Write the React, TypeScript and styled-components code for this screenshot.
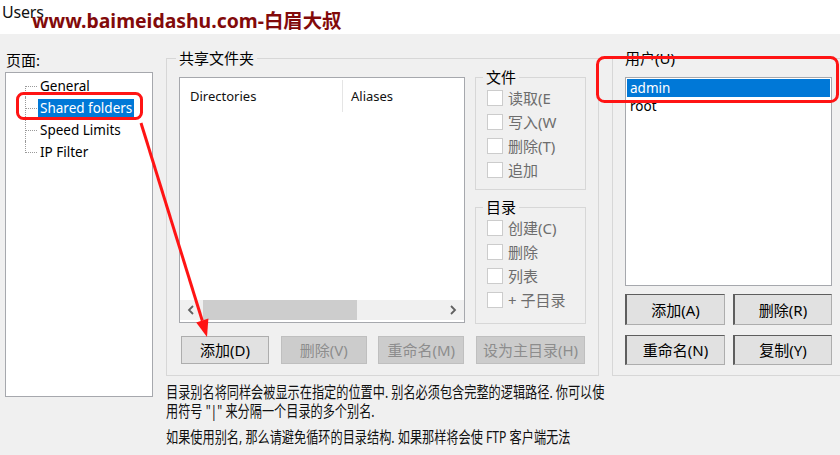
import React from "react";
import styled, { createGlobalStyle, css } from "styled-components";

const GlobalStyle = createGlobalStyle`
  html, body { margin: 0; padding: 0; background: #f0f0f0; }
  body { font-family: "Noto Sans", "Noto Sans CJK SC", sans-serif; color: #000; }
  * { box-sizing: border-box; }
`;

const Window = styled.div`
  position: relative;
  width: 840px;
  height: 455px;
  overflow: hidden;
  background: #f0f0f0;
`;

const TitleBar = styled.div`
  height: 34px;
  background: #fff;
  padding: 1px 0 0 2px;
  font-size: 16px;
  line-height: 22px;
  letter-spacing: -0.2px;
  color: #111;
`;

const Watermark = styled.div`
  position: absolute;
  left: 32px;
  top: 11px;
  font-size: 19.4px;
  line-height: 19px;
  font-weight: 700;
  color: #820a0a;
  white-space: nowrap;
`;

const Body = styled.div`
  display: flex;
  padding-left: 5px;
`;

const LeftCol = styled.div`
  width: 148px;
  flex: none;
  display: flex;
  flex-direction: column;
  padding-top: 17px;
`;

const PageLabel = styled.div`
  height: 21px;
  font-size: 15px;
  line-height: 18px;
  padding-left: 1px;
`;

const TreeBox = styled.div`
  height: 325px;
  background: #fff;
  border: 1px solid #a6a8ad;
  padding-top: 2px;
`;

const TreeRow = styled.div`
  height: 22px;
  display: flex;
  align-items: center;
  padding-left: 19px;
`;

const Connector = styled.span<{ $pos: "first" | "mid" | "last" }>`
  position: relative;
  width: 13px;
  height: 22px;
  flex: none;
  &::before {
    content: "";
    position: absolute;
    left: 0;
    top: ${(p) => (p.$pos === "first" ? "11px" : "0")};
    bottom: ${(p) => (p.$pos === "last" ? "10px" : "0")};
    border-left: 1px dotted #9a9a9a;
  }
  &::after {
    content: "";
    position: absolute;
    left: 1px;
    width: 11px;
    top: 11px;
    border-top: 1px dotted #9a9a9a;
  }
`;

const TreeLabel = styled.span<{ $selected?: boolean }>`
  font-size: 13.5px;
  line-height: 17px;
  padding: 1px 2px;
  white-space: nowrap;
  ${(p) =>
    p.$selected &&
    css`
      background: #0078d7;
      color: #fff;
    `}
`;

const Main = styled.div`
  margin-left: 13px;
  flex: none;
  display: flex;
  flex-direction: column;
`;

const Groups = styled.div`
  display: flex;
  gap: 13px;
  margin-top: 16px;
`;

const Group = styled.fieldset<{ $w: number; $h: number }>`
  margin: 0;
  padding: 0;
  min-width: 0;
  flex: none;
  width: ${(p) => p.$w}px;
  height: ${(p) => p.$h}px;
  border: 1px solid #d7d7d7;
`;

const Legend = styled.legend<{ $ml: number }>`
  margin-left: ${(p) => p.$ml}px;
  padding: 0 3px;
  font-size: 15px;
  line-height: 17px;
`;

const SharedInner = styled.div`
  display: flex;
  flex-direction: column;
  padding: 0 12px;
`;

const TopRow = styled.div`
  display: flex;
  align-items: flex-start;
  gap: 10px;
`;

const FileList = styled.div`
  margin-top: 10px;
  width: 286px;
  height: 246px;
  background: #fff;
  border: 1px solid #a6a8ad;
  display: flex;
  flex-direction: column;
`;

const ListHeader = styled.div`
  display: flex;
  padding-top: 2px;
`;

const HeaderCell = styled.div<{ $w?: number; $sep?: boolean }>`
  height: 32px;
  line-height: 32px;
  font-size: 13px;
  padding-left: ${(p) => (p.$sep ? 10 : 8)}px;
  width: ${(p) => (p.$w ? `${p.$w}px` : "auto")};
  border-right: ${(p) => (p.$sep ? "1px solid #e5e5e5" : "none")};
  color: #111;
`;

const ListSpacer = styled.div`
  flex: 1;
`;

const HScroll = styled.div`
  height: 20px;
  margin-bottom: 2px;
  display: flex;
  align-items: stretch;
  background: #f0f0f0;
`;

const ScrollArrow = styled.div`
  width: 22px;
  display: flex;
  align-items: center;
  justify-content: center;
  flex: none;
`;

const ScrollTrack = styled.div`
  flex: 1;
  display: flex;
`;

const ScrollThumb = styled.div`
  width: 154px;
  margin-left: 1px;
  background: #cdcdcd;
`;

const SideCol = styled.div`
  width: 111px;
  margin-top: 2px;
  display: flex;
  flex-direction: column;
  gap: 9px;
`;

const CheckRow = styled.div`
  height: 24px;
  display: flex;
  align-items: center;
  gap: 5px;
  padding-left: 11px;
`;

const CheckBox = styled.span`
  width: 16px;
  height: 16px;
  flex: none;
  background: #fff;
  border: 1px solid #cccccc;
`;

const CheckLabel = styled.span`
  font-size: 15px;
  line-height: 18px;
  color: #6d6d6d;
  white-space: nowrap;
`;

const ButtonRow = styled.div`
  margin-top: 12px;
  margin-left: 2px;
  width: 404px;
  display: flex;
  justify-content: space-between;
`;

const PushButton = styled.button<{ $w: number; $off?: boolean }>`
  width: ${(p) => p.$w}px;
  height: 28px;
  padding: 0;
  font-family: inherit;
  font-size: 15px;
  line-height: 26px;
  white-space: nowrap;
  background: ${(p) => (p.$off ? "#cccccc" : "#e1e1e1")};
  border: 1px solid ${(p) => (p.$off ? "#bfbfbf" : "#adadad")};
  color: ${(p) => (p.$off ? "#8d8d8d" : "#000")};
`;

const UserInner = styled.div`
  padding-left: 12px;
  display: flex;
  flex-direction: column;
`;

const UserList = styled.div`
  margin-top: 10px;
  width: 207px;
  height: 209px;
  background: #fff;
  border: 1px solid #a6a8ad;
  padding: 1px;
`;

const UserRow = styled.div<{ $selected?: boolean }>`
  height: 18px;
  line-height: 18px;
  font-size: 13.5px;
  padding-left: 3px;
  ${(p) =>
    p.$selected &&
    css`
      background: #0078d7;
      color: #fff;
    `}
`;

const UserButtons = styled.div`
  margin-top: 8px;
  width: 207px;
  display: grid;
  grid-template-columns: 100px 99px;
  grid-template-rows: 31px 30px;
  column-gap: 8px;
  row-gap: 10px;
`;

const RaisedButton = styled.button`
  padding: 0;
  font-family: inherit;
  font-size: 15px;
  line-height: 26px;
  background: #e1e1e1;
  color: #000;
  border-top: 1px solid #5e5e5e;
  border-left: 2px solid #5e5e5e;
  border-right: 1px solid #adadad;
  border-bottom: 1px solid #adadad;
`;

const Note = styled.div`
  margin-top: 7px;
  display: flex;
  flex-direction: column;
`;

const NoteLine = styled.div<{ $gap?: number }>`
  margin-top: ${(p) => p.$gap ?? 0}px;
  font-size: 16px;
  line-height: 19px;
  white-space: nowrap;
  transform: scaleX(0.76);
  transform-origin: left center;
  color: #111;
`;

const Overlay = styled.svg`
  position: absolute;
  left: 0;
  top: 0;
  pointer-events: none;
`;

const Chevron = ({ dir }: { dir: "left" | "right" }) => (
  <svg width="8" height="10" viewBox="0 0 8 10">
    <path
      d={dir === "left" ? "M6 1 L2 5 L6 9" : "M2 1 L6 5 L2 9"}
      fill="none"
      stroke="#606060"
      strokeWidth="1.8"
    />
  </svg>
);

const treeItems = [
  { label: "General", pos: "first" as const },
  { label: "Shared folders", pos: "mid" as const, selected: true },
  { label: "Speed Limits", pos: "mid" as const },
  { label: "IP Filter", pos: "last" as const },
];

const fileChecks = ["读取(E", "写入(W", "删除(T)", "追加"];
const dirChecks = ["创建(C)", "删除", "列表", "+ 子目录"];

export default function App() {
  return (
    <>
      <GlobalStyle />
      <Window>
        <TitleBar>Users</TitleBar>
        <Watermark>www.baimeidashu.com-白眉大叔</Watermark>
        <Body>
          <LeftCol>
            <PageLabel>页面:</PageLabel>
            <TreeBox>
              {treeItems.map((t) => (
                <TreeRow key={t.label}>
                  <Connector $pos={t.pos} />
                  <TreeLabel $selected={t.selected}>{t.label}</TreeLabel>
                </TreeRow>
              ))}
            </TreeBox>
          </LeftCol>
          <Main>
            <Groups>
              <Group $w={433} $h={326}>
                <Legend $ml={9}>共享文件夹</Legend>
                <SharedInner>
                  <TopRow>
                    <FileList>
                      <ListHeader>
                        <HeaderCell $w={163} $sep>
                          Directories
                        </HeaderCell>
                        <HeaderCell>Aliases</HeaderCell>
                      </ListHeader>
                      <ListSpacer />
                      <HScroll>
                        <ScrollArrow>
                          <Chevron dir="left" />
                        </ScrollArrow>
                        <ScrollTrack>
                          <ScrollThumb />
                        </ScrollTrack>
                        <ScrollArrow>
                          <Chevron dir="right" />
                        </ScrollArrow>
                      </HScroll>
                    </FileList>
                    <SideCol>
                      <Group $w={111} $h={121}>
                        <Legend $ml={7}>文件</Legend>
                        {fileChecks.map((c) => (
                          <CheckRow key={c}>
                            <CheckBox />
                            <CheckLabel>{c}</CheckLabel>
                          </CheckRow>
                        ))}
                      </Group>
                      <Group $w={111} $h={125}>
                        <Legend $ml={7}>目录</Legend>
                        {dirChecks.map((c) => (
                          <CheckRow key={c}>
                            <CheckBox />
                            <CheckLabel>{c}</CheckLabel>
                          </CheckRow>
                        ))}
                      </Group>
                    </SideCol>
                  </TopRow>
                  <ButtonRow>
                    <PushButton $w={88}>添加(D)</PushButton>
                    <PushButton $w={86} $off>
                      删除(V)
                    </PushButton>
                    <PushButton $w={86} $off>
                      重命名(M)
                    </PushButton>
                    <PushButton $w={109} $off>
                      设为主目录(H)
                    </PushButton>
                  </ButtonRow>
                </SharedInner>
              </Group>
              <Group $w={240} $h={326}>
                <Legend $ml={9}>用户(U)</Legend>
                <UserInner>
                  <UserList>
                    <UserRow $selected>admin</UserRow>
                    <UserRow>root</UserRow>
                  </UserList>
                  <UserButtons>
                    <RaisedButton>添加(A)</RaisedButton>
                    <RaisedButton>删除(R)</RaisedButton>
                    <RaisedButton>重命名(N)</RaisedButton>
                    <RaisedButton>复制(Y)</RaisedButton>
                  </UserButtons>
                </UserInner>
              </Group>
            </Groups>
            <Note>
              <NoteLine>
                目录别名将同样会被显示在指定的位置中. 别名必须包含完整的逻辑路径. 你可以使
              </NoteLine>
              <NoteLine>用符号 "|" 来分隔一个目录的多个别名.</NoteLine>
              <NoteLine $gap={7}>
                如果使用别名, 那么请避免循环的目录结构. 如果那样将会使 FTP 客户端无法
              </NoteLine>
            </Note>
          </Main>
        </Body>
        <Overlay width="840" height="455" viewBox="0 0 840 455">
          <rect x="17.5" y="93.5" width="124" height="25" rx="6" fill="none" stroke="#ff1414" strokeWidth="3" />
          <rect x="597.5" y="57.5" width="240" height="44" rx="7" fill="none" stroke="#ff1414" strokeWidth="3" />
          <line x1="141" y1="123" x2="202.3" y2="320.7" stroke="#ff1414" strokeWidth="3" />
          <polygon points="207,337 208.4,318.6 196.2,322.4" fill="#ff1414" />
        </Overlay>
      </Window>
    </>
  );
}
